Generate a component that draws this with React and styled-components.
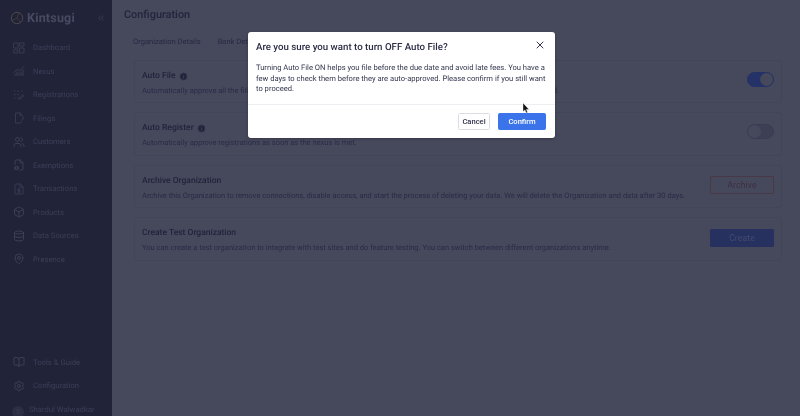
import React from "react";
import styled, { createGlobalStyle } from "styled-components";
import { ChartNoAxesCombined, Users, FileCog, Box, Database, MapPin, BookOpen, Settings, X, ChevronsLeft, Info } from "lucide-react";

const Global = createGlobalStyle`
  html, body { margin: 0; padding: 0; height: 100%; }
  body { font-family: Roboto, "Liberation Sans", sans-serif; background: #46485c; overflow: hidden; text-rendering: geometricPrecision; }
  * { box-sizing: border-box; }
`;

const Page = styled.div`
  width: 800px;
  height: 416px;
  overflow: hidden;
  position: relative;
`;
const Dimmed = styled.div`
  display: flex;
  width: 800px;
  height: 416px;
  filter: blur(0.4px);
`;
const Side = styled.aside`
  width: 112px;
  flex: none;
  height: 416px;
  background: #212339;
  display: flex;
  flex-direction: column;
  color: #3d3f58;
  overflow: hidden;
`;
const Brand = styled.div`
  height: 36px;
  flex: none;
  padding: 0 6px 0 10px;
  display: flex;
  align-items: center;
  gap: 3px;
  svg.chev { margin-left: auto; color: #484a62; }
`;
const BrandName = styled.span`
  font-size: 12.5px;
  font-weight: 700;
  letter-spacing: 0.2px;
  color: #484a62;
`;
const Nav = styled.nav`
  display: flex;
  flex-direction: column;
  flex: none;
`;
const FootNav = styled(Nav)`
  margin-top: auto;
  margin-bottom: -5px;
`;
const Item = styled.div`
  height: 23.5px;
  display: flex;
  align-items: center;
  gap: 8.5px;
  padding-left: 12.5px;
  font-size: 7.7px;
  white-space: nowrap;
  svg { flex: none; width: 12px; height: 12px; }
`;
const User = styled.div`
  height: 23.5px;
  display: flex;
  align-items: center;
  gap: 5px;
  padding-left: 12px;
  font-size: 7.7px;
`;
const Avatar = styled.span`
  width: 12px;
  height: 12px;
  margin-top: 5px;
  border-radius: 50%;
  background: #2c2e44;
  font-size: 7px;
  display: flex;
  align-items: center;
  justify-content: center;
`;
const Main = styled.main`
  flex: 1;
  min-width: 0;
  padding: 0 18px 0 12px;
  background: #46485c;
  color: #2b2d48;
`;
const Title = styled.h1`
  margin: 7px 0 0;
  height: 16px;
  line-height: 16px;
  font-size: 10.9px;
  font-weight: 500;
  color: #23253c;
`;
const Tabs = styled.div`
  display: flex;
  gap: 17px;
  margin-top: 13px;
  padding-left: 9px;
  font-size: 7.55px;
  line-height: 12px;
  height: 12px;
  color: #282a44;
`;
const Cards = styled.div`
  margin: 12px 0 0 10px;
  display: flex;
  flex-direction: column;
  gap: 9px;
`;
const Card = styled.section`
  height: 43.4px;
  border: 1px solid #424457;
  border-radius: 3px;
  padding: 9px 7px 0 7px;
  display: flex;
  justify-content: space-between;
  align-items: flex-start;
`;
const CardText = styled.div`
  display: flex;
  flex-direction: column;
  white-space: nowrap;
`;
const CardTitle = styled.div`
  display: flex;
  align-items: center;
  gap: 3.5px;
  font-size: 8.5px;
  font-weight: 500;
  line-height: 12px;
  color: #22243c;
  svg { width: 9px; height: 9px; color: #22243c; }
`;
const CardDesc = styled.div`
  margin-top: 3px;
  font-size: 7.5px;
  line-height: 11px;
  color: #2a2c47;
`;
const Switch = styled.div`
  width: 27px;
  height: 15px;
  margin-top: 2px;
  border-radius: 8px;
  display: flex;
  justify-content: ${(p) => (p.$on ? "flex-end" : "flex-start")};
  background: ${(p) => (p.$on ? "#253268" : "#3d3f54")};
  border: 1px solid ${(p) => (p.$on ? "#253268" : "#3a3c51")};
`;
const Knob = styled.span`
  width: 13px;
  height: 13px;
  border-radius: 50%;
  background: #46485c;
`;
const Action = styled.button`
  width: 64px;
  height: 18px;
  margin-top: 1.5px;
  border-radius: 1px;
  font: 400 8.4px Roboto, sans-serif;
  letter-spacing: 0.2px;
  border: 1px solid ${(p) => (p.$primary ? "#263160" : "#493845")};
  background: ${(p) => (p.$primary ? "#263160" : "#46485c")};
  color: ${(p) => (p.$primary ? "#454b6d" : "#3d2f40")};
`;
const Modal = styled.div`
  position: absolute;
  left: 248px;
  top: 32px;
  width: 307px;
  height: 106px;
  background: #fff;
  border-radius: 3px;
  box-shadow: 0 1px 3px rgba(0, 0, 0, 0.25);
  color: #2c3048;
  display: flex;
  flex-direction: column;
  filter: blur(0.2px);
`;
const ModalHead = styled.div`
  display: flex;
  justify-content: space-between;
  padding: 9px 9px 0 8px;
  height: 31px;
`;
const ModalTitle = styled.h2`
  margin: 0;
  font-size: 9.7px;
  line-height: 13px;
  font-weight: 500;
  color: #2a2d45;
`;
const Close = styled.span`
  color: #33364e;
  display: flex;
  height: 9px;
  margin-top: -2px;
  svg { width: 12px; height: 12px; }
`;
const ModalBody = styled.p`
  margin: 0;
  padding: 0 8px;
  height: 41px;
  font-size: 7.6px;
  line-height: 10.7px;
  color: #34374f;
`;
const ModalFoot = styled.div`
  border-top: 1px solid #edeef2;
  flex: 1;
  display: flex;
  justify-content: flex-end;
  align-items: flex-start;
  gap: 8px;
  padding: 8px 9px 0 0;
`;
const Btn = styled.button`
  height: 17px;
  border-radius: 1.5px;
  font: 500 7.6px Roboto, sans-serif;
  width: ${(p) => (p.$primary ? "48px" : "32px")};
  padding: 0;
  border: 1px solid ${(p) => (p.$primary ? "#3b74ea" : "#dcdde3")};
  background: ${(p) => (p.$primary ? "#3b74ea" : "#fff")};
  color: ${(p) => (p.$primary ? "#fff" : "#30334b")};
`;
const Cursor = styled.svg`
  position: absolute;
  left: 521.5px;
  top: 103px;
`;

const Logo = () => (
  <svg width="14" height="14" viewBox="0 0 14 14" fill="none">
    <circle cx="7" cy="7" r="5.7" stroke="#4d4847" strokeWidth="1" />
    <path d="M2 9.5 7 7l2-5M7 7l3.5 4" stroke="#443d3b" strokeWidth=".8" />
  </svg>
);
const base = { viewBox: "0 0 24 24", fill: "none", stroke: "currentColor", strokeWidth: 1.6, strokeLinecap: "round", strokeLinejoin: "round" };
const DashIcon = () => (
  <svg {...base}>
    <rect x="2" y="2" width="8" height="10" /><rect x="14" y="2" width="8" height="6" />
    <rect x="2" y="16" width="8" height="6" /><rect x="14" y="12" width="8" height="10" />
  </svg>
);
const RegIcon = () => (
  <svg {...base} strokeWidth="2.4">
    <path d="M3 4h1M10 4h1M17 4h1M3 11h1M10 11h1M3 18h1M10 18h1" />
    <path d="m13 20 1-3 6-6 2 2-6 6z" strokeWidth="1.6" />
  </svg>
);
const FileIcon = () => (
  <svg {...base}>
    <path d="M17 6l-3-4H5v20h10l3-2" /><path d="M14 2v5h4M20 9v5M17 17l3-3" />
  </svg>
);
const TxIcon = () => (
  <svg {...base}>
    <path d="M14 2H5a1 1 0 0 0-1 1v18a1 1 0 0 0 1 1h14a1 1 0 0 0 1-1V8z" /><path d="M14 2v6h6" />
    <path d="M14 12h-3a1.5 1.5 0 0 0 0 3h2a1.5 1.5 0 0 1 0 3h-3M12 10.5v9" />
  </svg>
);

const top = [
  ["Dashboard", <DashIcon />],
  ["Nexus", <ChartNoAxesCombined />],
  ["Registrations", <RegIcon />],
  ["Filings", <FileIcon />],
  ["Customers", <Users />],
  ["Exemptions", <FileCog />],
  ["Transactions", <TxIcon />],
  ["Products", <Box />],
  ["Data Sources", <Database />],
  ["Presence", <MapPin />],
];

export default function App() {
  return (
    <Page>
      <Global />
      <Dimmed>
        <Side>
          <Brand>
            <Logo />
            <BrandName>Kintsugi</BrandName>
            <ChevronsLeft className="chev" size={10} strokeWidth={1.4} />
          </Brand>
          <Nav>
            {top.map(([t, i]) => <Item key={t}>{i}{t}</Item>)}
          </Nav>
          <FootNav>
            <Item><BookOpen />Tools &amp; Guide</Item>
            <Item><Settings />Configuration</Item>
            <User><Avatar>S</Avatar>Shardul Walwadkar</User>
          </FootNav>
        </Side>
        <Main>
          <Title>Configuration</Title>
          <Tabs><span>Organization Details</span><span>Bank Details</span></Tabs>
          <Cards>
            <Card>
              <CardText>
                <CardTitle>Auto File <Info fill="currentColor" stroke="#46485c" /></CardTitle>
                <CardDesc>Automatically approve all the filings as soon as they are ready, unless you choose to review each of them before they are filed.</CardDesc>
              </CardText>
              <Switch $on><Knob /></Switch>
            </Card>
            <Card>
              <CardText>
                <CardTitle>Auto Register <Info fill="currentColor" stroke="#46485c" /></CardTitle>
                <CardDesc>Automatically approve registrations as soon as the nexus is met.</CardDesc>
              </CardText>
              <Switch><Knob /></Switch>
            </Card>
            <Card>
              <CardText>
                <CardTitle>Archive Organization</CardTitle>
                <CardDesc>Archive this Organization to remove connections, disable access, and start the process of deleting your data. We will delete the Organization and data after 30 days.</CardDesc>
              </CardText>
              <Action>Archive</Action>
            </Card>
            <Card>
              <CardText>
                <CardTitle>Create Test Organization</CardTitle>
                <CardDesc>You can create a test organization to integrate with test sites and do feature testing. You can switch between different organizations anytime.</CardDesc>
              </CardText>
              <Action $primary>Create</Action>
            </Card>
          </Cards>
        </Main>
      </Dimmed>
      <Modal>
        <ModalHead>
          <ModalTitle>Are you sure you want to turn OFF Auto File?</ModalTitle>
          <Close><X /></Close>
        </ModalHead>
        <ModalBody>
          Turning Auto File ON helps you file before the due date and avoid late fees. You have a few days to check them before they are auto-approved. Please confirm if you still want to proceed.
        </ModalBody>
        <ModalFoot>
          <Btn>Cancel</Btn>
          <Btn $primary>Confirm</Btn>
        </ModalFoot>
      </Modal>
      <Cursor width="8" height="11" viewBox="0 0 8 11">
        <path d="M1 0v8.5l2-1.6 1.2 3 1.4-.6-1.2-2.9H7z" fill="#111" stroke="#fff" strokeWidth=".4" />
      </Cursor>
    </Page>
  );
}
